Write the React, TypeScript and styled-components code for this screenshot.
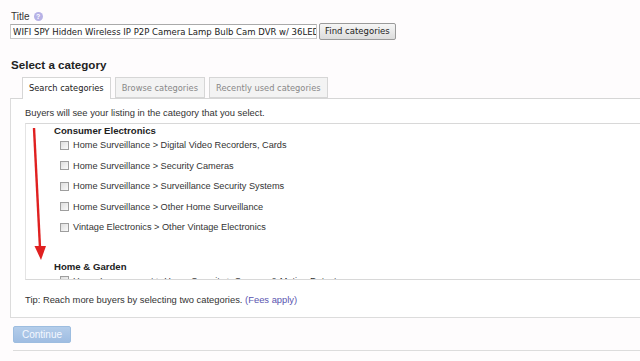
import React from "react";
import styled, { createGlobalStyle } from "styled-components";

const Global = createGlobalStyle`
  html, body { margin: 0; padding: 0; background: #fefcfd; }
  body { font-family: "Liberation Sans", Arial, sans-serif; color: #333; overflow: hidden; }
`;

const Page = styled.div`
  width: 640px;
  height: 361px;
  overflow: hidden;
  padding: 10px 0 0 10px;
  box-sizing: border-box;
`;

const Label = styled.div`
  display: flex;
  align-items: center;
  gap: 4px;
  font-size: 10px;
  color: #333;
  padding-left: 1px;
  height: 12px;
`;

const Help = styled.span`
  width: 9px;
  height: 9px;
  border-radius: 50%;
  background: #b7b2e6;
  color: #fff;
  font-size: 7px;
  font-weight: bold;
  display: inline-flex;
  align-items: center;
  justify-content: center;
`;

const TitleRow = styled.div`
  display: flex;
  align-items: center;
  gap: 2px;
  margin-top: 1px;
`;

const TitleInput = styled.input`
  width: 307px;
  height: 15px;
  box-sizing: border-box;
  border: 1px solid #c9c9c9;
  border-top-color: #aaa;
  background: #fff;
  font-family: "DejaVu Sans", Verdana, sans-serif;
  font-size: 8.5px;
  line-height: 13px;
  padding: 0 0 0 2px;
  margin: 0;
  color: #222;
  outline: none;
`;

const FindButton = styled.button`
  height: 17px;
  padding: 0 5px;
  margin: 0;
  border: 1px solid #9a9a9a;
  border-radius: 2px;
  background: linear-gradient(#f6f6f6, #dcdcdc);
  font-family: "DejaVu Sans", Verdana, sans-serif;
  font-size: 8.5px;
  color: #222;
  line-height: 15px;
`;

const Heading = styled.h2`
  margin: 18px 0 0 1px;
  font-size: 11.6px;
  font-weight: bold;
  color: #222;
  height: 14px;
  line-height: 14px;
`;

const Tabs = styled.div`
  display: flex;
  gap: 4px;
  margin: 5px 0 0 12px;
  height: 21px;
`;

const Tab = styled.div<{ $active?: boolean }>`
  box-sizing: border-box;
  height: ${(p) => (p.$active ? "22px" : "21px")};
  padding: 0 6px;
  border: 1px solid #d6d6d6;
  border-bottom: ${(p) => (p.$active ? "none" : "1px solid #d6d6d6")};
  background: ${(p) => (p.$active ? "#fff" : "#f3f3f3")};
  color: ${(p) => (p.$active ? "#222" : "#888")};
  font-family: "DejaVu Sans", Verdana, sans-serif;
  font-size: 8.3px;
  line-height: 20px;
  white-space: nowrap;
  position: relative;
  z-index: 1;
`;

const Panel = styled.div`
  box-sizing: border-box;
  width: 640px;
  height: 220px;
  border: 1px solid #dcdcdc;
  border-right: none;
  border-top-color: #d6d6d6;
  background: #fff;
  padding: 8px 0 0 14px;
`;

const Intro = styled.div`
  font-size: 9.4px;
  color: #333;
  height: 11px;
  line-height: 11px;
`;

const ScrollBox = styled.div`
  position: relative;
  box-sizing: border-box;
  width: 630px;
  height: 157px;
  margin-top: 5px;
  border-top: 1px solid #d8d8d8;
  border-bottom: 1px solid #d8d8d8;
  border-left: 1px solid #e4e4e4;
  overflow: hidden;
  padding: 1px 0 0 28px;
`;

const Group = styled.div<{ $gap?: number }>`
  margin-top: ${(p) => p.$gap ?? 0}px;
`;

const GroupTitle = styled.div`
  font-size: 9.6px;
  font-weight: bold;
  color: #222;
  height: 11px;
  line-height: 11px;
`;

const Row = styled.label`
  display: flex;
  align-items: center;
  gap: 4px;
  height: 20.5px;
  padding-left: 6px;
  font-size: 9.2px;
  color: #333;
  white-space: nowrap;
  &:first-of-type {
    margin-top: -1px;
  }
`;

const Box = styled.span`
  width: 9px;
  height: 9px;
  box-sizing: border-box;
  border: 1px solid #9e9e9e;
  background: linear-gradient(135deg, #dedede, #fafafa);
  flex: none;
`;

const Arrow = styled.svg`
  position: absolute;
  left: 0;
  top: 0;
`;

const Tip = styled.div`
  margin-top: 14px;
  font-size: 9.4px;
  color: #333;
`;

const Link = styled.span`
  color: #5a55b0;
`;

const ContinueButton = styled.button`
  display: block;
  margin: 8px 0 0 3px;
  width: 58px;
  height: 17px;
  border: 1px solid #9dbde0;
  border-radius: 2px;
  background: linear-gradient(#b4cdea, #9fbde2);
  color: #f4f8ff;
  font-family: "Liberation Sans", Arial, sans-serif;
  font-size: 10px;
  padding: 0;
`;

const Rule = styled.div`
  margin: 7px 0 0 3px;
  height: 1px;
  background: #dcdcdc;
`;

const items1 = [
  "Home Surveillance > Digital Video Recorders, Cards",
  "Home Surveillance > Security Cameras",
  "Home Surveillance > Surveillance Security Systems",
  "Home Surveillance > Other Home Surveillance",
  "Vintage Electronics > Other Vintage Electronics",
];

export default function App() {
  return (
    <Page>
      <Global />
      <Label>
        Title <Help>?</Help>
      </Label>
      <TitleRow>
        <TitleInput
          readOnly
          value="WIFI SPY Hidden Wireless IP P2P Camera Lamp Bulb Cam DVR w/ 36LED Light"
        />
        <FindButton>Find categories</FindButton>
      </TitleRow>
      <Heading>Select a category</Heading>
      <Tabs>
        <Tab $active>Search categories</Tab>
        <Tab>Browse categories</Tab>
        <Tab>Recently used categories</Tab>
      </Tabs>
      <Panel>
        <Intro>Buyers will see your listing in the category that you select.</Intro>
        <ScrollBox>
          <Arrow width="24" height="140" viewBox="0 0 24 140">
            <path d="M8 4 L14 124" stroke="#e02020" strokeWidth="2.4" fill="none" />
            <path d="M8.5 122 L20 122 L15 136 Z" fill="#e02020" />
          </Arrow>
          <Group>
            <GroupTitle>Consumer Electronics</GroupTitle>
            {items1.map((t) => (
              <Row key={t}>
                <Box />
                {t}
              </Row>
            ))}
          </Group>
          <Group $gap={23}>
            <GroupTitle>Home &amp; Garden</GroupTitle>
            <Row>
              <Box />
              Home Improvement &gt; Home Security &gt; Sensors &amp; Motion Detectors
            </Row>
          </Group>
        </ScrollBox>
        <Tip>
          Tip: Reach more buyers by selecting two categories. <Link>(Fees apply)</Link>
        </Tip>
      </Panel>
      <ContinueButton>Continue</ContinueButton>
      <Rule />
    </Page>
  );
}
